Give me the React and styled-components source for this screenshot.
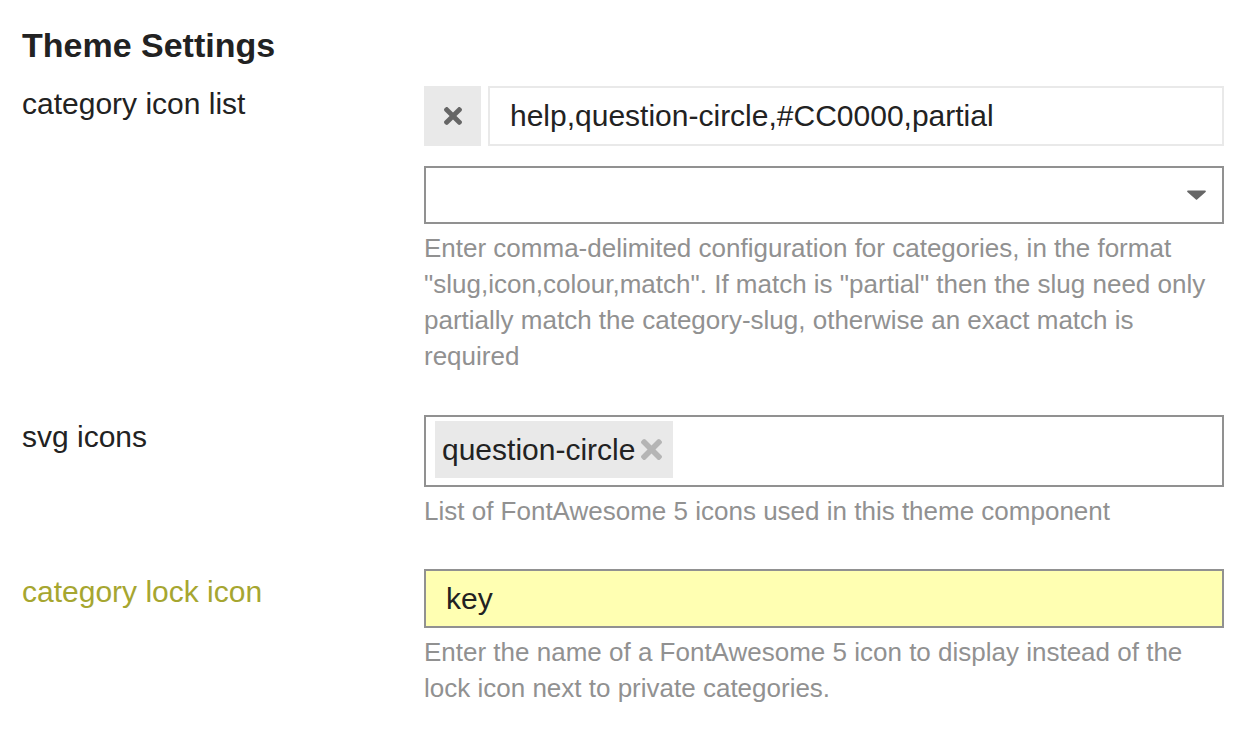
import React from "react";
import styled, { createGlobalStyle } from "styled-components";

const Global = createGlobalStyle`
  html, body { margin: 0; padding: 0; background: #fff; }
  body { font-family: "Liberation Sans", Arial, Helvetica, sans-serif; color: #222; }
`;

const Page = styled.div`
  padding: 25px 0 0 22px;
  width: 1256px;
  box-sizing: border-box;
`;

const Title = styled.h3`
  margin: 0;
  font-size: 34px;
  line-height: 40px;
  font-weight: 700;
  color: #222;
`;

const Row = styled.div`
  display: grid;
  grid-template-columns: 402px 800px;
  margin-top: ${(p) => p.$top}px;
`;

const Label = styled.div`
  font-size: 30px;
  line-height: 36px;
  padding-top: ${(p) => p.$offset}px;
  color: ${(p) => (p.$overridden ? "#a6a630" : "#222")};
`;

const Controls = styled.div`
  display: flex;
  flex-direction: column;
`;

const ValueRow = styled.div`
  display: flex;
  gap: 7px;
  height: 60px;
`;

const RemoveButton = styled.button`
  width: 57px;
  height: 60px;
  border: none;
  background: #e9e9e9;
  display: flex;
  align-items: center;
  justify-content: center;
  padding: 0;
  cursor: pointer;
`;

const TextInput = styled.div`
  flex: ${(p) => (p.$grow ? "1 1 auto" : "none")};
  box-sizing: border-box;
  height: ${(p) => p.$h || 60}px;
  border: 2px solid ${(p) => (p.$light ? "#e9e9e9" : "#919191")};
  background: ${(p) => (p.$highlight ? "#ffffb2" : "#fff")};
  padding: 0 20px;
  display: flex;
  align-items: center;
  font-size: 30px;
  color: #222;
  white-space: nowrap;
`;

const Select = styled.div`
  margin-top: 20px;
  height: 58px;
  box-sizing: border-box;
  border: 2px solid #919191;
  display: flex;
  align-items: center;
  justify-content: flex-end;
  padding-right: 16px;
`;

const Help = styled.div`
  font-size: 26px;
  line-height: 36px;
  color: #919191;
  margin-top: 6px;
`;

const MultiBox = styled.div`
  height: 72px;
  box-sizing: border-box;
  border: 2px solid #919191;
  padding: 4px 9px 7px;
  display: flex;
  align-items: flex-start;
`;

const Chip = styled.div`
  height: 57px;
  background: #e9e9e9;
  display: flex;
  align-items: center;
  padding: 0 11px 0 7px;
  gap: 6px;
  font-size: 30px;
  color: #222;
`;

const TimesIcon = ({ size, color }) => (
  <svg width={size} height={size} viewBox="0 80 352 352" aria-hidden="true">
    <path
      fill={color}
      d="M242.72 256l100.07-100.07c12.280-12.28 12.28-32.19 0-44.48l-22.24-22.24c-12.28-12.28-32.19-12.28-44.48 0L176 189.28 75.93 89.21c-12.28-12.28-32.19-12.28-44.48 0L9.21 111.45c-12.28 12.28-12.28 32.19 0 44.48L109.28 256 9.21 356.07c-12.28 12.28-12.28 32.19 0 44.48l22.24 22.24c12.28 12.28 32.2 12.28 44.48 0L176 322.72l100.07 100.07c12.28 12.28 32.2 12.28 44.48 0l22.24-22.24c12.28-12.28 12.28-32.19 0-44.48L242.72 256z"
    />
  </svg>
);

const Caret = () => (
  <svg width="19" height="10" viewBox="0 0 19 10" aria-hidden="true">
    <path d="M1 0.5h17c0.8 0 1.2 0.9 0.6 1.5L10.1 9.4c-0.3 0.3-0.9 0.3-1.2 0L0.4 2C-0.2 1.4 0.2 0.5 1 0.5z" fill="#666" />
  </svg>
);

export default function App() {
  return (
    <>
      <Global />
      <Page>
        <Title>Theme Settings</Title>

        <Row $top={21}>
          <Label $offset={0}>category icon list</Label>
          <Controls>
            <ValueRow>
              <RemoveButton aria-label="remove">
                <TimesIcon size={18} color="#666" />
              </RemoveButton>
              <TextInput $light $grow>help,question-circle,#CC0000,partial</TextInput>
            </ValueRow>
            <Select>
              <Caret />
            </Select>
            <Help>
              Enter comma-delimited configuration for categories, in the format
              "slug,icon,colour,match". If match is "partial" then the slug need only
              partially match the category-slug, otherwise an exact match is
              required
            </Help>
          </Controls>
        </Row>

        <Row $top={41}>
          <Label $offset={4}>svg icons</Label>
          <Controls>
            <MultiBox>
              <Chip>
                question-circle
                <TimesIcon size={21} color="#b5b5b5" />
              </Chip>
            </MultiBox>
            <Help>List of FontAwesome 5 icons used in this theme component</Help>
          </Controls>
        </Row>

        <Row $top={40}>
          <Label $offset={5} $overridden>category lock icon</Label>
          <Controls>
            <TextInput $highlight $h={59}>key</TextInput>
            <Help>
              Enter the name of a FontAwesome 5 icon to display instead of the
              lock icon next to private categories.
            </Help>
          </Controls>
        </Row>
      </Page>
    </>
  );
}
